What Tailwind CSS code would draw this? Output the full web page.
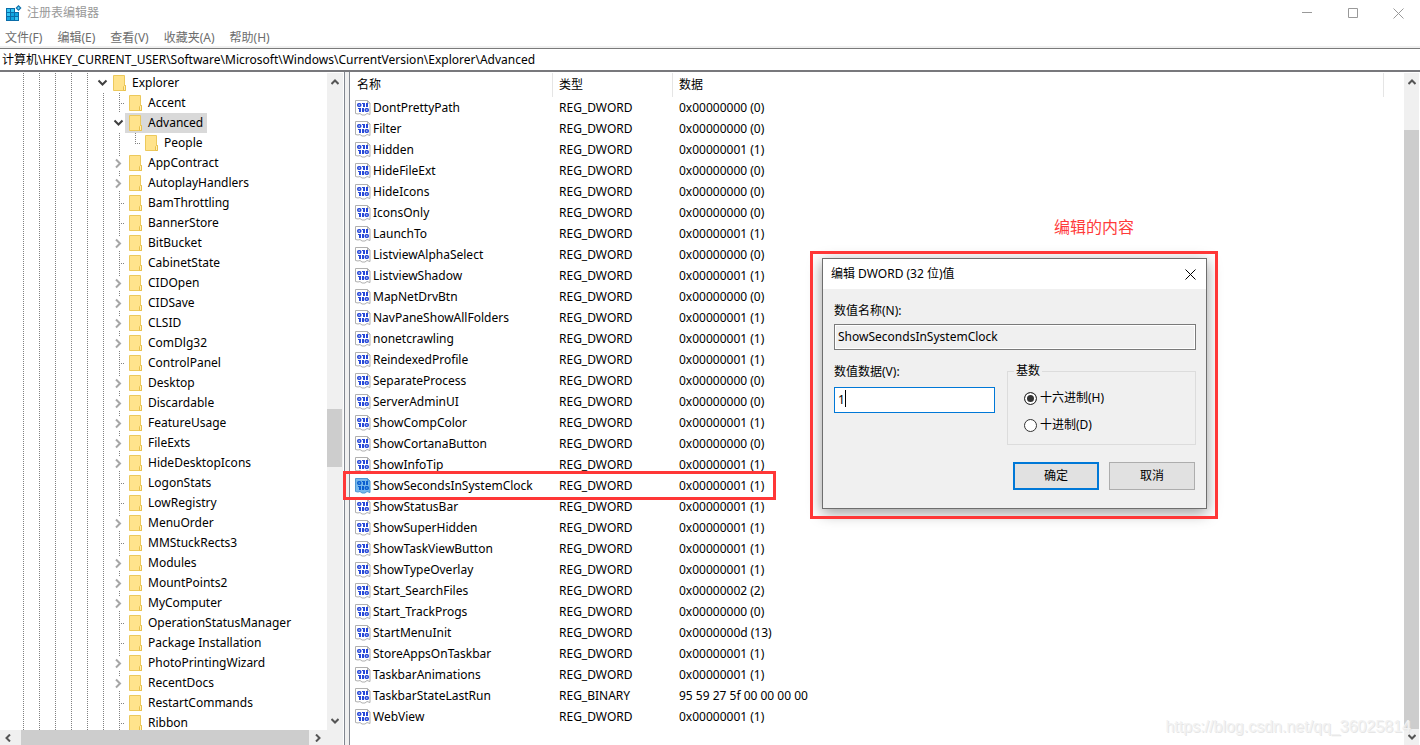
<!DOCTYPE html>
<html lang="zh-CN">
<head>
    <meta charset="UTF-8">
    <meta name="viewport" content="width=device-width, initial-scale=1.0">
    <title>注册表编辑器</title>
    <script src="https://cdn.jsdelivr.net/npm/@tailwindcss/browser@4"></script>
</head>
<body class="relative h-screen overflow-hidden flex flex-col bg-white text-black text-[12px] leading-[20px] font-['Noto_Sans','Noto_Sans_CJK_SC',sans-serif]">
    <!-- Title bar -->
    <header class="h-[26px] shrink-0 flex items-center pl-[5px] text-[#999999]">
        <svg class="mr-[5px]" width="17" height="17" viewBox="0 0 17 17">
            <path fill="#0a6ca8" d="M1 3h9v4h4v9H1z"/>
            <path fill="#35c6f4" d="M2 4h3v3H2zM6 4h3v3H6zM2 8h3v3H2zM10 12h3v3h-3z"/>
            <path fill="#12a5e0" d="M6 8h3v3H6zM10 8h3v3h-3zM2 12h3v3H2zM6 12h3v3H6z"/>
            <path fill="#0a6ca8" d="M13.500 0l3 3-3 3-3-3z"/>
            <path fill="#5fd0f5" d="M13.500 1.600l1.400 1.400-1.400 1.400L12.100 3z"/>
        </svg>
        <h1 class="grow">注册表编辑器</h1>
        <button class="w-[46px] h-full flex items-center justify-center" aria-label="最小化">
            <svg width="11" height="11" viewBox="0 0 11 11" fill="none" stroke="#999999"><path d="M0 4.500h10"/></svg>
        </button>
        <button class="w-[46px] h-full flex items-center justify-center" aria-label="最大化">
            <svg width="11" height="11" viewBox="0 0 11 11" fill="none" stroke="#999999"><path d="M.5 .5h9v9h-9z"/></svg>
        </button>
        <button class="w-[44px] h-full flex items-center justify-center" aria-label="关闭">
            <svg width="11" height="11" viewBox="0 0 11 11" fill="none" stroke="#999999"><path d="M.5 .5l10 10M10.500 .5l-10 10"/></svg>
        </button>
    </header>

    <!-- Menu -->
    <nav class="h-[22px] shrink-0 flex items-center gap-[15px] pt-[4px] pl-[5px] text-[#6d6d6d] border-b-2 border-[#f0f0f0]">
        <a href="#">文件(F)</a>
        <a href="#">编辑(E)</a>
        <a href="#">查看(V)</a>
        <a href="#">收藏夹(A)</a>
        <a href="#">帮助(H)</a>
    </nav>

    <!-- Address bar -->
    <input type="text" aria-label="地址" value="计算机\HKEY_CURRENT_USER\Software\Microsoft\Windows\CurrentVersion\Explorer\Advanced"
           class="h-[24px] shrink-0 w-full pl-[2px] pb-[2px] border-t border-b-2 border-t-[#7a7a7a] border-b-[#78787c] focus:outline-none">

    <main class="grow min-h-0 flex">
        <!-- Key tree -->
        <section class="w-[345px] shrink-0 flex flex-col border-r border-[#828790] pr-px">
            <div class="grow min-h-0 flex pt-px">
                <ul id="tree" class="grow overflow-hidden"></ul>
                <div class="w-[16px] shrink-0 flex flex-col justify-between items-center bg-[#f0f0f0]">
                    <svg class="mt-[5px] mr-px" width="8" height="8" viewBox="0 0 8 8" fill="none" stroke="#555555" stroke-width="2"><path d="M.5 6L4 2.500 7.500 6"/></svg>
                    <div class="grow w-full flex flex-col">
                        <div class="grow-[321]"></div>
                        <div class="h-[58px] mr-px bg-[#cdcdcd]"></div>
                        <div class="grow-[248]"></div>
                    </div>
                    <svg class="mb-[5px] mr-px" width="8" height="8" viewBox="0 0 8 8" fill="none" stroke="#555555" stroke-width="2"><path d="M.5 2L4 5.500 7.500 2"/></svg>
                </div>
            </div>
            <div class="h-[15px] shrink-0 flex items-center bg-[#f0f0f0]">
                <svg class="mx-[4px]" width="8" height="8" viewBox="0 0 8 8" fill="none" stroke="#555555" stroke-width="2"><path d="M6 .5L2.500 4 6 7.500"/></svg>
                <div class="grow h-full ml-[5px] mr-[5px] bg-[#cdcdcd]"></div>
                <svg class="mr-[21px]" width="8" height="8" viewBox="0 0 8 8" fill="none" stroke="#555555" stroke-width="2"><path d="M2 .5L5.500 4 2 7.500"/></svg>
            </div>
        </section>
        <div class="w-[5px] shrink-0 bg-[#f0f0f0] border-r border-[#828790]"></div>

        <!-- Value list -->
        <section class="grow min-w-0 flex pt-px pr-px">
            <div class="grow min-w-0">
                <table class="w-full table-fixed border-separate border-spacing-0 text-left">
                    <thead>
                        <tr class="h-[24px]">
                            <th class="w-[203px] p-0 pl-[7px] font-normal border-r border-[#e5e5e5]">名称</th>
                            <th class="w-[120px] p-0 pl-[6px] font-normal border-r border-[#e5e5e5]">类型</th>
                            <th class="p-0 pl-[6px] font-normal border-r border-[#e5e5e5]">数据</th>
                            <th class="w-[20px] p-0" aria-label="空"></th>
                        </tr>
                    </thead>
                    <tbody id="values"></tbody>
                </table>
            </div>
            <div class="w-[15px] shrink-0 flex flex-col items-center bg-[#f0f0f0]">
                <svg class="mt-[5px]" width="8" height="8" viewBox="0 0 8 8" fill="none" stroke="#555555" stroke-width="2"><path d="M.5 6L4 2.500 7.500 6"/></svg>
                <div class="grow w-full mt-[44px] mb-[4px] bg-[#cdcdcd]"></div>
                <svg class="mb-[4px]" width="8" height="8" viewBox="0 0 8 8" fill="none" stroke="#555555" stroke-width="2"><path d="M.5 2L4 5.500 7.500 2"/></svg>
            </div>
        </section>
    </main>

    <!-- Annotations -->
    <p class="absolute left-[1054px] top-[215px] text-[16px] leading-[24px] text-[#ff3b3b]">编辑的内容</p>
    <p class="absolute right-[9px] bottom-[6px] text-[16px] leading-[24px] text-[#f2f2f2] text-shadow-[1px_1px_0px_#e6e6e6] font-['Liberation_Sans',sans-serif]">https://blog.csdn.net/qq_36025814</p>
    <div class="absolute left-[343px] top-[471px] w-[433px] h-[29px] border-3 border-[#ff3737]"></div>

    <!-- Edit dialog -->
    <form class="absolute left-[822px] top-[258px] w-[385px] h-[251px] flex flex-col bg-[#f0f0f0] border border-[#6e6e6e] shadow-[0_4px_14px_rgba(0,0,0,0.4)]">
        <div class="h-[30px] shrink-0 flex items-center pl-[8px] pr-[10px] bg-white">
            <h2 class="grow">编辑 DWORD (32 位)值</h2>
            <button type="button" aria-label="关闭">
                <svg width="11" height="11" viewBox="0 0 11 11" fill="none" stroke="#000000"><path d="M.5 .5l10 10M10.500 .5l-10 10"/></svg>
            </button>
        </div>
        <div class="grow pl-[11px] pr-[10px] pt-[12px]">
            <label for="value-name" class="block">数值名称(N):</label>
            <input id="value-name" type="text" readonly value="ShowSecondsInSystemClock"
                   class="block w-full h-[26px] mt-[3px] pl-[3px] pb-[2px] bg-[#f0f0f0] border border-[#7a7a7a] inset-ring inset-ring-white focus:outline-none">
            <div class="flex justify-between mt-[12px]">
                <div class="w-[161px]">
                    <label for="value-data" class="block">数值数据(V):</label>
                    <div class="relative mt-[5px]">
                        <input id="value-data" type="text" value="1"
                               class="block w-full h-[26px] pl-[3px] pb-[2px] bg-white border border-[#0078d7] focus:outline-none">
                        <span class="absolute left-[11px] top-[3px] w-px h-[17px] bg-black"></span>
                    </div>
                </div>
                <fieldset class="w-[189px] h-[83px] pl-[16px] border border-[#dcdcdc]">
                    <legend class="-ml-[10px] px-[2px] leading-[18px]">基数</legend>
                    <label class="flex items-center gap-[3px] h-[20px] mt-[8px]">
                        <input type="radio" name="base" checked class="appearance-none size-[13px] rounded-full bg-white border border-[#333333] inset-ring-2 inset-ring-white checked:bg-[#333333]">
                        十六进制(H)
                    </label>
                    <label class="flex items-center gap-[3px] h-[20px] mt-[7px]">
                        <input type="radio" name="base" class="appearance-none size-[13px] rounded-full bg-white border border-[#333333] inset-ring-2 inset-ring-white checked:bg-[#333333]">
                        十进制(D)
                    </label>
                </fieldset>
            </div>
            <div class="flex justify-end gap-[10px] mt-[17px] pr-px">
                <button type="submit" class="w-[86px] h-[28px] bg-[#e1e1e1] border-2 border-[#0078d7]">确定</button>
                <button type="button" class="w-[86px] h-[28px] bg-[#e1e1e1] border border-[#adadad]">取消</button>
            </div>
        </div>
    </form>
    <div class="absolute left-[810px] top-[251px] w-[408px] h-[268px] border-3 border-[#ff3737] pointer-events-none"></div>

    <script>
        // [name, depth, state]: state is open, closed or leaf
        const keys = [
            ['Explorer', 0, 'open'], ['Accent', 1, 'leaf'], ['Advanced', 1, 'open'], ['People', 2, 'leaf'],
            ['AppContract', 1, 'closed'], ['AutoplayHandlers', 1, 'closed'], ['BamThrottling', 1, 'leaf'],
            ['BannerStore', 1, 'leaf'], ['BitBucket', 1, 'closed'], ['CabinetState', 1, 'leaf'],
            ['CIDOpen', 1, 'closed'], ['CIDSave', 1, 'closed'], ['CLSID', 1, 'closed'], ['ComDlg32', 1, 'closed'],
            ['ControlPanel', 1, 'leaf'], ['Desktop', 1, 'closed'], ['Discardable', 1, 'closed'],
            ['FeatureUsage', 1, 'closed'], ['FileExts', 1, 'closed'], ['HideDesktopIcons', 1, 'closed'],
            ['LogonStats', 1, 'leaf'], ['LowRegistry', 1, 'leaf'], ['MenuOrder', 1, 'closed'],
            ['MMStuckRects3', 1, 'leaf'], ['Modules', 1, 'closed'], ['MountPoints2', 1, 'closed'],
            ['MyComputer', 1, 'closed'], ['OperationStatusManager', 1, 'leaf'], ['Package Installation', 1, 'leaf'],
            ['PhotoPrintingWizard', 1, 'closed'], ['RecentDocs', 1, 'closed'], ['RestartCommands', 1, 'leaf'],
            ['Ribbon', 1, 'leaf']
        ];

        const values = [
            ['DontPrettyPath', 0], ['Filter', 0], ['Hidden', 1], ['HideFileExt', 0], ['HideIcons', 0],
            ['IconsOnly', 0], ['LaunchTo', 1], ['ListviewAlphaSelect', 0], ['ListviewShadow', 1],
            ['MapNetDrvBtn', 0], ['NavPaneShowAllFolders', 1], ['nonetcrawling', 1], ['ReindexedProfile', 1],
            ['SeparateProcess', 0], ['ServerAdminUI', 0], ['ShowCompColor', 1], ['ShowCortanaButton', 0],
            ['ShowInfoTip', 1], ['ShowSecondsInSystemClock', 1], ['ShowStatusBar', 1], ['ShowSuperHidden', 1],
            ['ShowTaskViewButton', 1], ['ShowTypeOverlay', 1], ['Start_SearchFiles', 2], ['Start_TrackProgs', 0],
            ['StartMenuInit', 13], ['StoreAppsOnTaskbar', 1], ['TaskbarAnimations', 1],
            ['TaskbarStateLastRun', '95 59 27 5f 00 00 00 00'], ['WebView', 1]
        ];

        const dots = 'stroke="#808080" stroke-dasharray="1 1"';
        const guide = `<svg class="shrink-0" width="16" height="20" viewBox="0 0 16 20"><path ${dots} d="M8.500 0V20"/></svg>`;

        function joint(depth, state) {
            let lines = `<path ${dots} d="M8.500 0V3M8.500 18V20"/>`;
            if (state === 'leaf') {
                lines = `<path fill="none" ${dots} d="M8.500 0V${depth === 2 ? 10 : 20}M8 10.500H14"/>`;
            } else if (state === 'open') {
                lines = '<path fill="none" stroke="#404040" stroke-width="2" d="M3.500 7.500L7.500 11.500L11.500 7.500"/>';
            } else {
                lines += '<path fill="none" stroke="#a6a6a6" stroke-width="2" d="M5 6.500L9 10.500L5 14.500"/>';
            }
            return `<svg class="shrink-0" width="14" height="20" viewBox="0 0 14 20">${lines}</svg>`;
        }

        const folder = `
            <svg width="13" height="16" viewBox="0 0 13 16">
                <path fill="#ffe38c" stroke="#ecc95c" d="M.5 .5h11v10h1v5H.5z"/>
                <path fill="#fff0b5" stroke="#e8c04c" d="M10.500 15.500v-4l1-1h1v5z"/>
            </svg>`;

        document.getElementById('tree').innerHTML = keys.map(([name, depth, state]) => `
            <li class="flex h-[20px] pl-[15px] whitespace-nowrap">
                ${guide.repeat(5 + depth)}${joint(depth, state)}
                <a href="#" class="flex items-center gap-[6px] px-[4px] ${name === 'Advanced' ? 'bg-[#d9d9d9]' : ''}">${folder}${name}</a>
            </li>`).join('');

        function valueIcon(selected) {
            const page = selected ? '#78b9ec' : '#ffffff';
            const edge = selected ? '#4f97d2' : '#b0b0b0';
            const bits = selected ? '#0a5fd0' : '#2748d8';
            return `
                <svg class="shrink-0" width="16" height="16" viewBox="0 0 16 16" fill="none">
                    <path fill="${page}" stroke="${edge}" d="M.5 .5h12l2.500 2.500v11.500l-3-1-2 1.500h-3l-2-1.500-2 .5-2.500-.5z"/>
                    <path stroke="${edge}" d="M12.500 .5v2.500h2.500"/>
                    <rect x="2.750" y="3.750" width="3" height="2.500" rx="1" stroke="${bits}" stroke-width="1.500"/>
                    <rect x="10.250" y="8.750" width="3" height="2.500" rx="1" stroke="${bits}" stroke-width="1.500"/>
                    <path stroke="${bits}" stroke-width="2" d="M9 3v4M12 3v4M5 8v4M8 8v4"/>
                    <path stroke="${bits}" d="M7 3.500h1M3 8.500h1"/>
                </svg>`;
        }

        document.getElementById('values').innerHTML = values.map(([name, value]) => {
            const binary = typeof value === 'string';
            const data = binary ? value : `0x${value.toString(16).padStart(8, '0')} (${value})`;
            return `
                <tr class="h-[21px]">
                    <td class="p-0 pl-[5px]"><div class="flex items-center gap-[2px]">${valueIcon(name === 'ShowSecondsInSystemClock')}${name}</div></td>
                    <td class="p-0 pl-[6px]">${binary ? 'REG_BINARY' : 'REG_DWORD'}</td>
                    <td class="p-0 pl-[6px]">${data}</td>
                    <td class="p-0"></td>
                </tr>`;
        }).join('');
    </script>
</body>
</html>
